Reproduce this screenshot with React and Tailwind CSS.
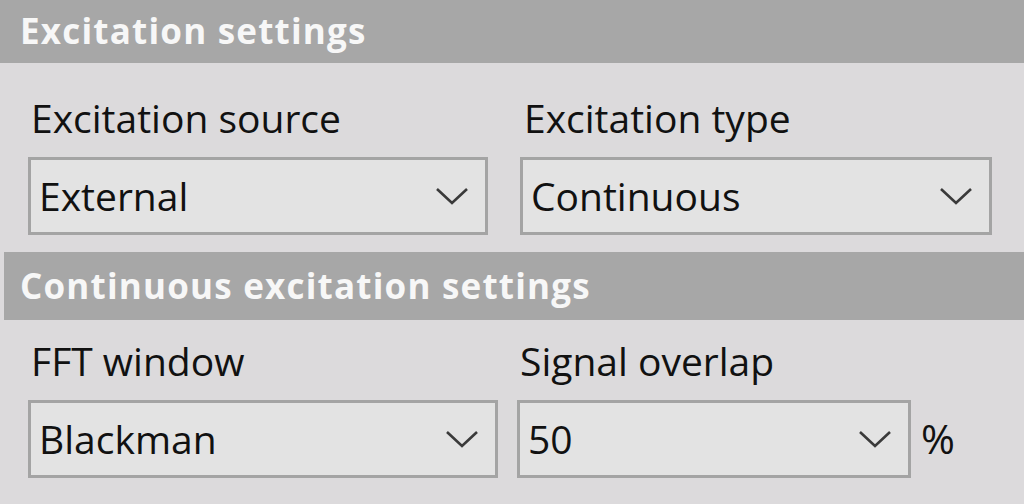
import React from 'react';

function Chevron() {
  return (
    <svg width="34" height="20" viewBox="0 0 34 20" className="shrink-0">
      <path d="M2 3 L17 17 L32 3" fill="none" stroke="#3a3a3a" strokeWidth="2.6" />
    </svg>
  );
}

function Select({ value, className }) {
  return (
    <div className={`h-[78px] flex items-center justify-between pl-[8px] pr-[16px] bg-[#e3e3e3] border-[3px] border-[#a4a4a4] ${className}`}>
      <span className="text-[39px] text-[#111]">{value}</span>
      <Chevron />
    </div>
  );
}

function Header({ children, className }) {
  return (
    <div className={`flex items-center bg-[#a7a7a7] text-[#f7f7f7] font-bold text-[35px] tracking-[1.2px] ${className}`}>
      {children}
    </div>
  );
}

export default function App() {
  return (
    <div className="w-[1024px] h-[504px] bg-[#dcdadc] overflow-hidden" style={{ fontFamily: '"Open Sans", "Noto Sans", sans-serif' }}>
      {/* Excitation settings */}
      <Header className="h-[63px] pl-[20px]">Excitation settings</Header>
      <div className="flex gap-[32px] pl-[28px] pr-[32px] pt-[28px]">
        <div className="w-[460px]">
          <div className="text-[39px] text-[#111] pl-[3px] leading-[54px] mb-[12px]">Excitation source</div>
          <Select value="External" />
        </div>
        <div className="flex-1">
          <div className="text-[39px] text-[#111] pl-[4px] leading-[54px] mb-[12px]">Excitation type</div>
          <Select value="Continuous" />
        </div>
      </div>

      {/* Continuous excitation settings */}
      <Header className="h-[68px] ml-[4px] mt-[17px] pl-[16px]">Continuous excitation settings</Header>
      <div className="flex items-end pl-[28px] pt-[14px]">
        <div className="w-[470px]">
          <div className="text-[39px] text-[#111] pl-[3px] leading-[54px] mb-[12px]">FFT window</div>
          <Select value="Blackman" />
        </div>
        <div className="w-[394px] ml-[19px]">
          <div className="text-[39px] text-[#111] pl-[3px] leading-[54px] mb-[12px]">Signal overlap</div>
          <Select value="50" />
        </div>
        <div className="h-[78px] flex items-center pl-[10px] text-[41px] text-[#111]">%</div>
      </div>
    </div>
  );
}
